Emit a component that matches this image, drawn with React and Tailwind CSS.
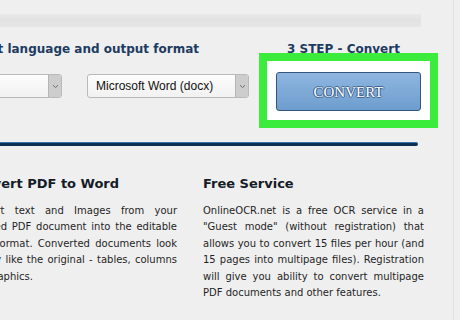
import React from 'react'

const leftLines = [
  'Convert text and Images from your',
  'scanned PDF document into the editable',
  'Word format. Converted documents look',
  'exactly like the original - tables, columns',
  'and graphics.',
]

const rightLines = [
  'OnlineOCR.net is a free OCR service in a',
  '"Guest mode" (without registration) that',
  'allows you to convert 15 files per hour (and',
  '15 pages into multipage files). Registration',
  'will give you ability to convert multipage',
  'PDF documents and other features.',
]

function Chevron() {
  return (
    <svg width="7" height="5" viewBox="0 0 7 5" fill="none">
      <path d="M1 1.2 L3.5 3.6 L6 1.2" stroke="#6b6b6b" strokeWidth="1" />
    </svg>
  )
}

function Select({ label }) {
  return (
    <div className="flex w-[162px] h-[24px] rounded-[3px] border border-[#b9b9b9] bg-gradient-to-b from-[#fdfdfd] to-[#f1f1f1] overflow-hidden">
      <div className="flex-1 pl-[8px] flex items-center text-[12px] text-[#111] font-['Liberation_Sans',Arial,sans-serif]">
        {label}
      </div>
      <div className="w-[13px] border-l border-[#b5b5b5] bg-[#cdcdcd] flex items-center justify-center">
        <Chevron />
      </div>
    </div>
  )
}

function Paragraph({ lines }) {
  return (
    <div className="mt-[9px] text-[10px] leading-[16.4px] text-[#1f1f1f]">
      {lines.map((l, i) => (
        <div key={i} className={i < lines.length - 1 ? 'text-justify [text-align-last:justify]' : ''}>
          {l}
        </div>
      ))}
    </div>
  )
}

export default function App() {
  return (
    <div className="w-[460px] h-[320px] overflow-hidden bg-[#efefef] font-['DejaVu_Sans',Verdana,sans-serif]">
      <div className="w-[454px] h-full border-r border-[#e2e2e2] pt-[14px]">
        {/* blurred file row edge */}
        <div className="w-[421px] h-[13px] bg-gradient-to-b from-[#e9e9e9] via-[#e2e2e2] to-[#e6e6e6]" />

        {/* step 2 + step 3 */}
        <div className="flex items-start mt-[15px]">
          <div className="flex flex-col w-[349px] ml-[-100px] shrink-0">
            <div className="self-end mr-[50px] whitespace-nowrap text-[12px] leading-[14px] font-bold text-[#1d3b61]">
              2 STEP - Select language and output format
            </div>
            <div className="flex gap-[25px] mt-[18px]">
              <Select label="ENGLISH" />
              <Select label="Microsoft Word (docx)" />
            </div>
          </div>

          <div className="flex flex-col ml-[10px] w-[179px] shrink-0">
            <div className="pl-[28px] whitespace-nowrap text-[12px] leading-[14px] font-bold text-[#1d3b61]">
              3 STEP - Convert
            </div>
            <div className="mt-[-3px] border-[8px] border-[#3cec3c] bg-white pl-[9px] pr-[9px] pt-[11px] pb-[9px]">
              <div className="h-[39px] rounded-[3px] border border-[#34557d] bg-gradient-to-b from-[#8fb6e0] to-[#6d9dce] flex items-center justify-center pt-[2px]">
                <span className="font-['Liberation_Serif','Times_New_Roman',serif] text-[15px] text-white [text-shadow:1px_0_0_#3a5f8c,-1px_0_0_#3a5f8c,0_1px_0_#3a5f8c,0_-1px_0_#3a5f8c]">
                  CONVERT
                </span>
              </div>
            </div>
          </div>
        </div>

        {/* divider */}
        <div className="mt-[14px] w-[418px] h-[4px] rounded-r-full bg-[#0c2f55] border-t border-[#3574ad]" />

        {/* info columns */}
        <div className="flex gap-[26px] mt-[28px] ml-[-35px]">
          <div className="w-[212px] shrink-0">
            <div className="text-[13px] leading-[20px] font-bold text-[#141c28] whitespace-nowrap">Convert PDF to Word</div>
            <Paragraph lines={leftLines} />
          </div>
          <div className="w-[221px] shrink-0">
            <div className="text-[13px] leading-[20px] font-bold text-[#141c28] whitespace-nowrap">Free Service</div>
            <Paragraph lines={rightLines} />
          </div>
        </div>
      </div>
    </div>
  )
}
